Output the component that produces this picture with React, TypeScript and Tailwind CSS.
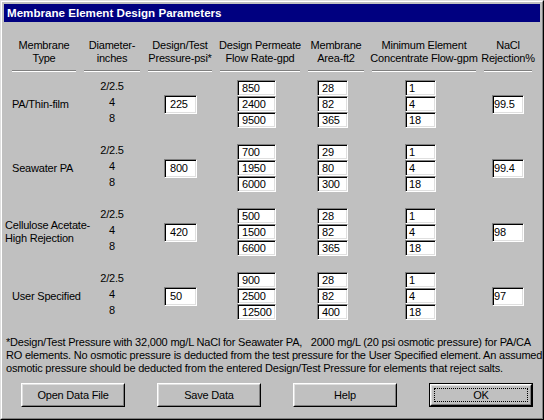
import React from "react";

type Row = {
  label: string[];
  indent: string;
  pressure: string;
  permeate: string[];
  area: string[];
  conc: string[];
  nacl: string;
};

const rows: Row[] = [
  { label: ["PA/Thin-film"], indent: "ml-0", pressure: "225", permeate: ["850", "2400", "9500"], area: ["28", "82", "365"], conc: ["1", "4", "18"], nacl: "99.5" },
  { label: ["Seawater PA"], indent: "ml-0", pressure: "800", permeate: ["700", "1950", "6000"], area: ["29", "80", "300"], conc: ["1", "4", "18"], nacl: "99.4" },
  { label: ["Cellulose Acetate-", "High Rejection"], indent: "-ml-[7px]", pressure: "420", permeate: ["500", "1500", "6600"], area: ["28", "82", "365"], conc: ["1", "4", "18"], nacl: "98" },
  { label: ["User Specified"], indent: "ml-0", pressure: "50", permeate: ["900", "2500", "12500"], area: ["28", "82", "400"], conc: ["1", "4", "18"], nacl: "97" },
];

const headers = [
  ["Membrane", "Type"],
  ["Diameter-", "inches"],
  ["Design/Test", "Pressure-psi*"],
  ["Design Permeate", "Flow Rate-gpd"],
  ["Membrane", "Area-ft2"],
  ["Minimum Element", "Concentrate Flow-gpm"],
  ["NaCl", "Rejection%"],
];

// sunken win95 text field
function Field({ value, className }: { value: string; className: string }) {
  return (
    <div
      className={`bg-white border border-t-[#808080] border-l-[#808080] border-b-white border-r-white shadow-[inset_1px_1px_0_#000,inset_-1px_-1px_0_#dfdfdf] flex items-center text-[11px] leading-none text-black ${className}`}
    >
      {value}
    </div>
  );
}

function Stack({ values, className }: { values: string[]; className: string }) {
  return (
    <div className="flex flex-col">
      {values.map((v, i) => (
        <Field key={i} value={v} className={`h-[16px] ${className}`} />
      ))}
    </div>
  );
}

function Button({ label, isDefault }: { label: string; isDefault?: boolean }) {
  if (isDefault) {
    return (
      <div className="w-[104px] h-[24px] border border-black">
        <div className="w-full h-full border border-t-white border-l-white border-b-black border-r-black">
          <div className="w-full h-full border border-t-[#dfdfdf] border-l-[#dfdfdf] border-b-[#808080] border-r-[#808080] p-[2px]">
            <div className="w-full h-full border border-dotted border-black flex items-center justify-center text-[11px]">
              {label}
            </div>
          </div>
        </div>
      </div>
    );
  }
  return (
    <div className="w-[104px] h-[24px] border border-t-white border-l-white border-b-black border-r-black">
      <div className="w-full h-full border border-t-[#dfdfdf] border-l-[#dfdfdf] border-b-[#808080] border-r-[#808080] flex items-center justify-center text-[11px]">
        {label}
      </div>
    </div>
  );
}

export default function App() {
  return (
    <div className="w-[544px] h-[420px] bg-[#c0c0c0] font-['Liberation_Sans',Arial,sans-serif] text-black tracking-[-0.2px] border border-t-[#dfdfdf] border-l-[#dfdfdf] border-b-black border-r-black">
      <div className="w-full h-full border border-t-white border-l-white border-b-[#808080] border-r-[#808080] p-[2px] flex flex-col">
        {/* title bar */}
        <div className="h-[18px] bg-[#000080] flex items-center pl-[3px]">
          <span className="text-white font-bold text-[11.6px] leading-none tracking-normal">Membrane Element Design Parameters</span>
        </div>

        <div className="grid grid-cols-[64px_56px_64px_80px_56px_104px_48px] gap-x-[8px] ml-[8px] mt-[17px]">
          {headers.map((h, i) => (
            <div key={i} className="flex flex-col items-center">
              <div className="text-[11px] leading-[13px] text-center whitespace-nowrap">{h[0]}</div>
              <div className="text-[11px] leading-[13px] text-center whitespace-nowrap">{h[1]}</div>
              <div className="w-full mt-[5px] border-t border-t-[#808080] border-b border-b-white" />
            </div>
          ))}
        </div>

        <div className="grid grid-cols-[64px_56px_64px_80px_56px_104px_48px] gap-x-[8px] auto-rows-[64px] ml-[8px] mt-[8px]">
          {rows.map((r, i) => (
            <React.Fragment key={i}>
              <div className={`h-[48px] flex flex-col justify-center whitespace-nowrap text-[11px] leading-[13px] ${r.indent}`}>
                {r.label.map((l, j) => (
                  <div key={j}>{l}</div>
                ))}
              </div>
              <div className="h-[48px] flex flex-col items-center">
                {["2/2.5", "4", "8"].map((d) => (
                  <div key={d} className="h-[16px] text-[11px] leading-[12px]">
                    {d}
                  </div>
                ))}
              </div>
              <div className="h-[48px] flex items-center">
                <Field value={r.pressure} className="ml-[16px] w-[33px] h-[19px] pl-[5px]" />
              </div>
              <div className="h-[48px] pl-[17px]">
                <Stack values={r.permeate} className="w-[39px] pl-[4px]" />
              </div>
              <div className="h-[48px] pl-[9px]">
                <Stack values={r.area} className="w-[31px] pl-[4px]" />
              </div>
              <div className="h-[48px] pl-[33px]">
                <Stack values={r.conc} className="w-[31px] pl-[3px]" />
              </div>
              <div className="h-[48px] flex items-center">
                <Field value={r.nacl} className="ml-[8px] w-[32px] h-[19px] pl-[1px]" />
              </div>
            </React.Fragment>
          ))}
        </div>

        {/* footnote */}
        <div className="mt-0 pl-[2px] text-[11px] leading-[13px] whitespace-pre">
          <div>*Design/Test Pressure with 32,000 mg/L NaCl for Seawater PA,   2000 mg/L (20 psi osmotic pressure) for PA/CA</div>
          <div>RO elements. No osmotic pressure is deducted from the test pressure for the User Specified element. An assumed</div>
          <div>osmotic pressure should be deducted from the entered Design/Test Pressure for elements that reject salts.</div>
        </div>

        <div className="flex gap-x-[32px] pl-[17px] mt-[8px]">
          <Button label="Open Data File" />
          <Button label="Save Data" />
          <Button label="Help" />
          <Button label="OK" isDefault />
        </div>
      </div>
    </div>
  );
}
